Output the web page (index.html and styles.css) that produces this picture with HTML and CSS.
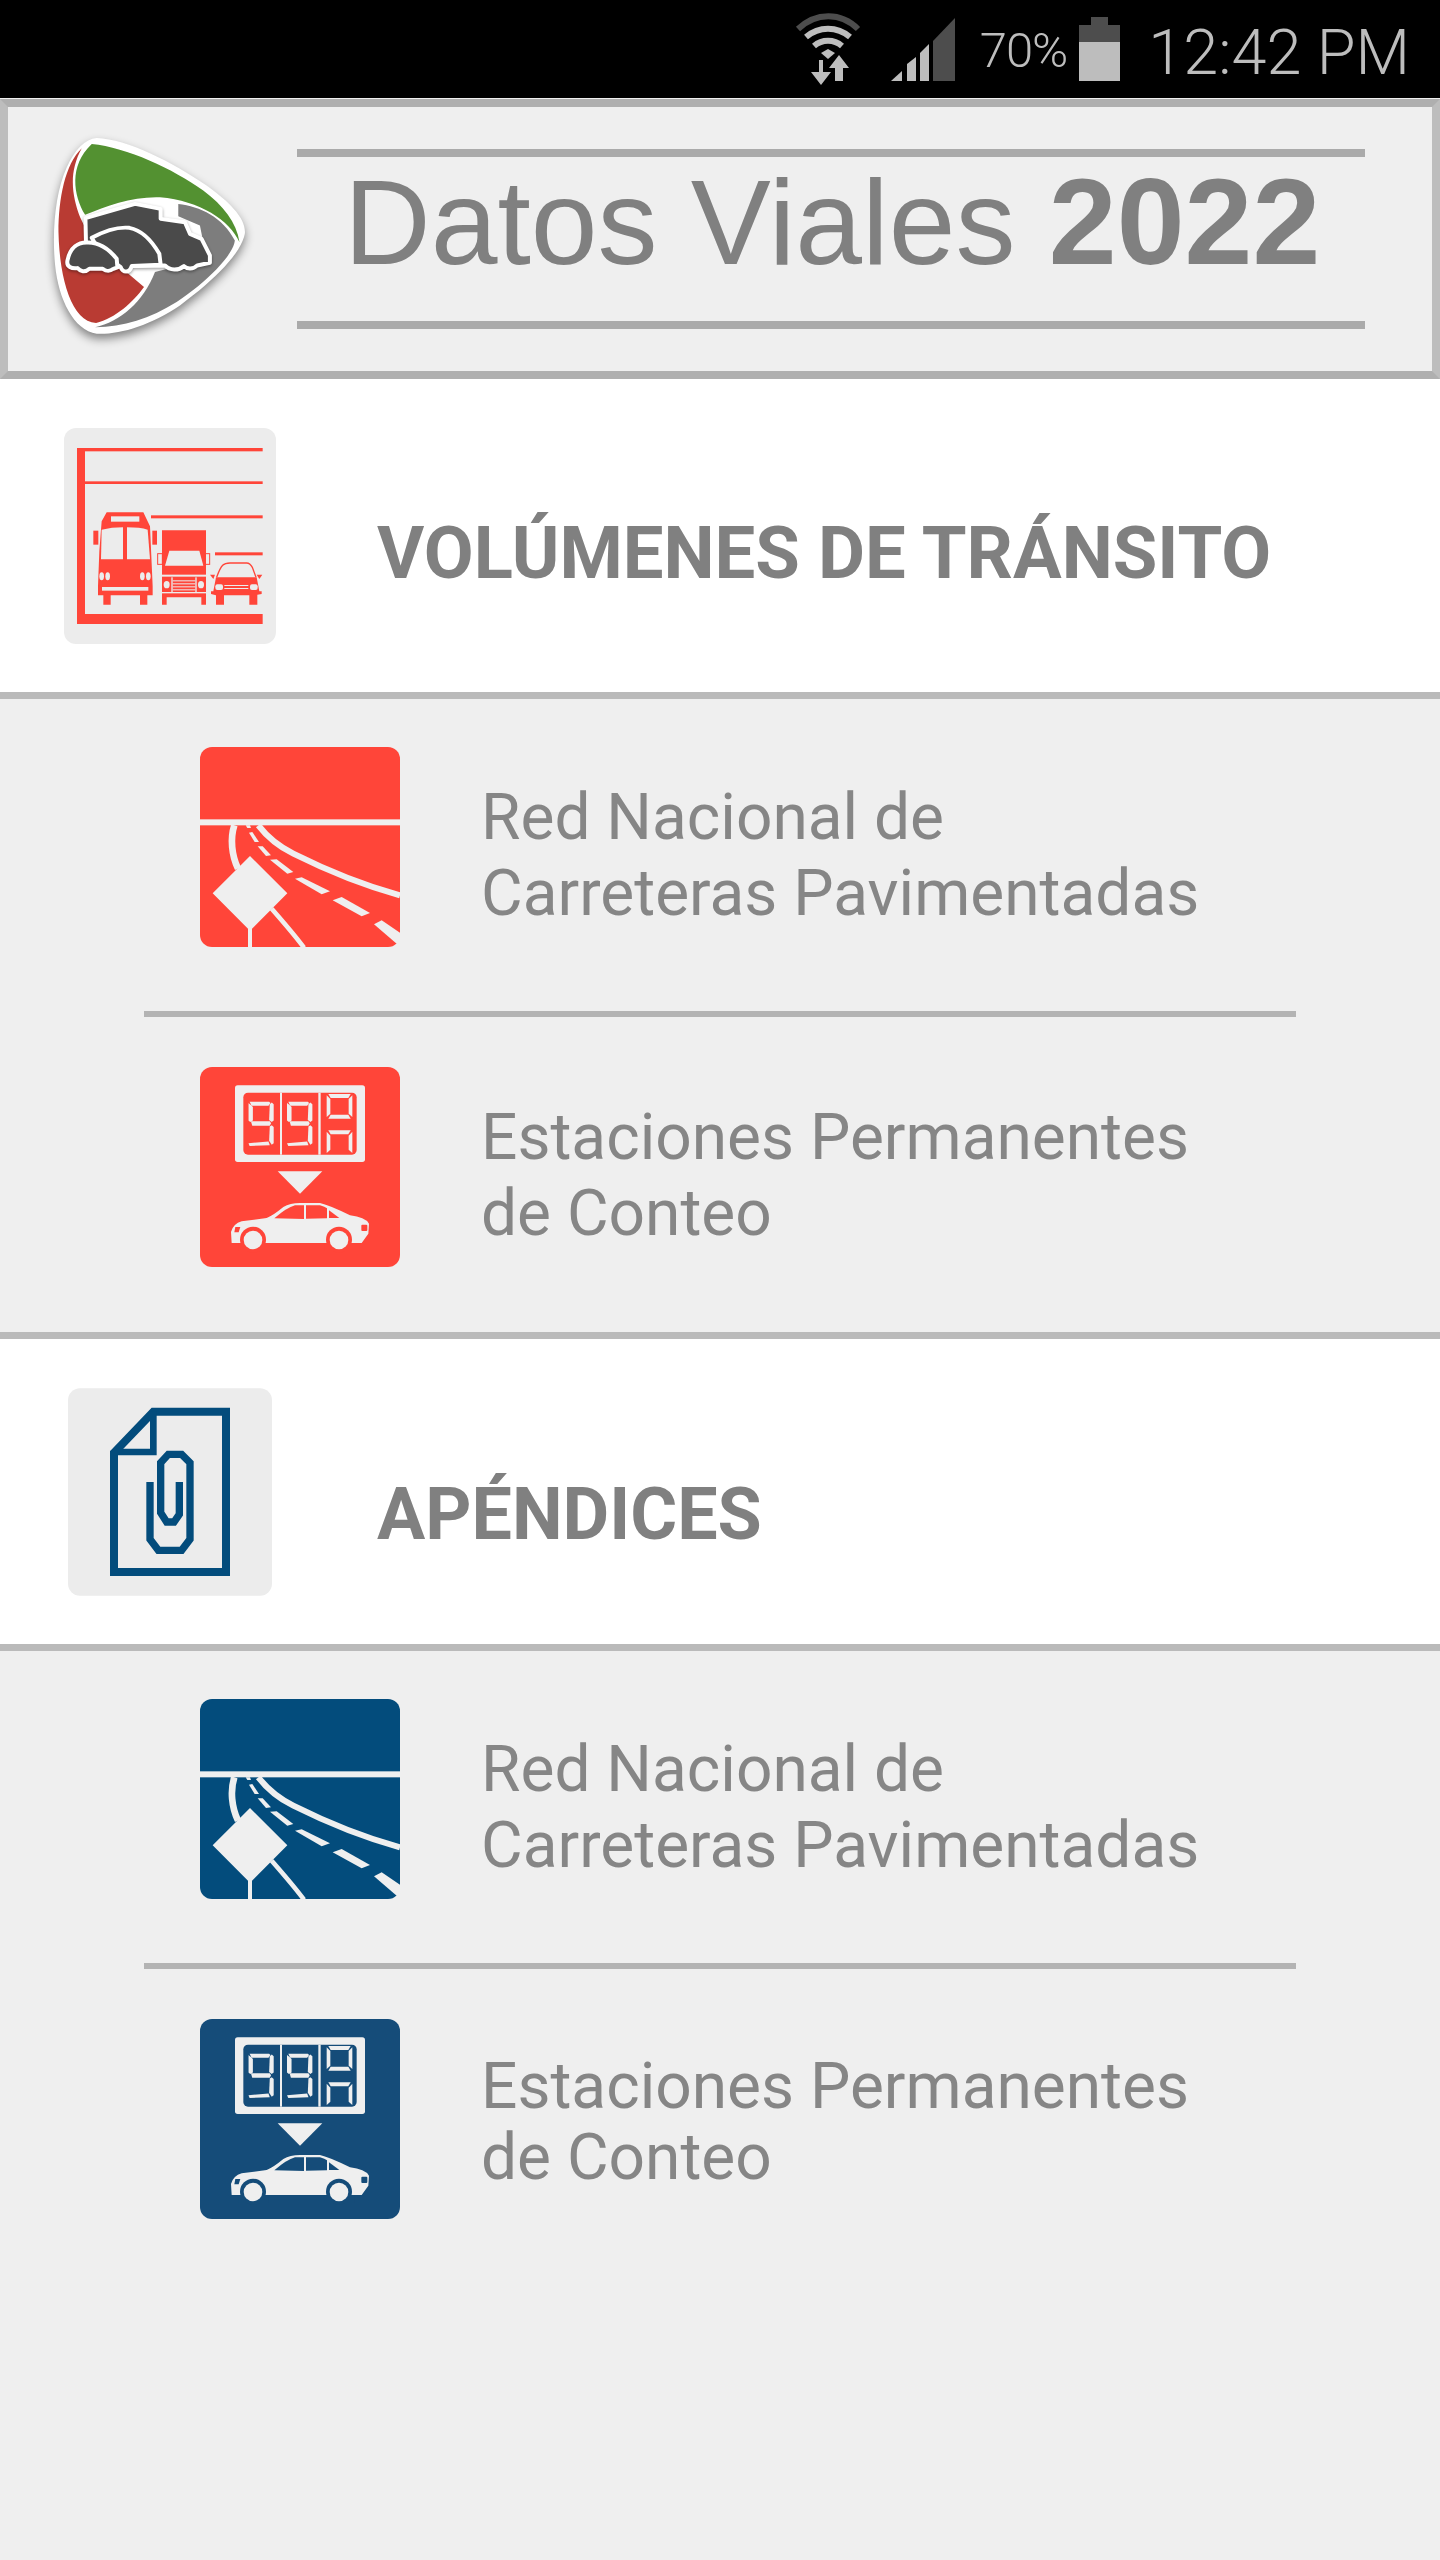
FILE: index.html
```html
<!DOCTYPE html>
<html lang="es">
<head>
<meta charset="utf-8">
<title>Datos Viales 2022</title>
<link rel="stylesheet" href="styles.css">
</head>
<body>
<svg class="defs" xmlns="http://www.w3.org/2000/svg">
  <symbol id="road" viewBox="60 50 600 600">
    <rect x="60" y="50" width="600" height="600" rx="36" fill="currentColor"/>
    <rect x="60" y="267" width="600" height="18" fill="#efefef"/>
    <g fill="none" stroke="#efefef">
      <path d="M163 285 C150 325 155 375 174 415" stroke-width="20"/>
      <path d="M235 285 C262 320 290 345 340 370 C440 420 550 465 660 495" stroke-width="18"/>
      <path d="M275 535 C310 575 345 615 372 652" stroke-width="14"/>
    </g>
    <g fill="#efefef">
      <polygon points="197,285 210,285 213,293 202,293"/>
      <polygon points="207,307 217,305 237,335 224,335"/>
      <polygon points="233,348 248,348 273,375 258,377"/>
      <polygon points="270,388 290,387 340,425 322,430"/>
      <polygon points="345,445 365,441 450,483 425,492"/>
      <polygon points="458,510 485,500 570,548 545,558"/>
      <polygon points="582,582 605,570 660,607 660,635 650,640"/>
      <polygon points="210,377 322,489 216,595 216,650 204,650 204,595 98,489"/>
    </g>
  </symbol>
  <symbol id="digit" viewBox="0 0 80 140">
    <g fill="#efefef">
      <polygon points="4,2 64,2 68,6 62,14 10,14"/>
      <polygon points="0,6 8,12 14,18 14,60 6,64 0,60"/>
      <polygon points="66,10 72,4 78,10 78,60 72,64 64,58"/>
      <polygon points="8,62 66,62 70,68 66,76 12,76"/>
      <polygon points="66,78 72,74 78,80 78,130 72,134 64,122"/>
      <polygon points="0,130 62,124 66,136 4,138"/>
    </g>
  </symbol>
  <symbol id="counter" viewBox="60 50 600 600">
    <rect x="60" y="50" width="600" height="600" rx="36" fill="currentColor"/>
    <rect x="165" y="105" width="390" height="230" rx="8" fill="#efefef"/>
    <rect x="190" y="127" width="340" height="186" rx="14" fill="currentColor"/>
    <rect x="300" y="127" width="6" height="186" fill="#efefef"/>
    <rect x="415" y="127" width="7" height="186" fill="#efefef"/>
    <use href="#digit" x="205" y="152" width="78" height="137"/>
    <use href="#digit" x="321" y="152" width="78" height="137"/>
    <g fill="#efefef">
      <polygon points="445,131 512,131 505,143 452,143"/>
      <polygon points="440,135 451,146 451,190 440,200"/>
      <polygon points="517,135 506,146 506,190 517,200"/>
      <polygon points="445,205 512,205 505,193 452,193"/>
      <polygon points="445,240 512,240 505,252 452,252"/>
      <polygon points="440,244 451,256 451,298 440,308"/>
      <polygon points="517,244 506,256 506,298 517,308"/>
    </g>
    <polygon points="293,363 427,363 360,430" fill="#efefef"/>
    <path d="M155 578 L153 545 Q160 520 185 513 L260 503 Q280 495 310 470 Q330 458 360 458 L420 458 Q450 465 510 495 Q555 500 567 520 L565 550 L545 578 Z" fill="#efefef"/>
    <g fill="currentColor">
      <path d="M283 504 Q320 472 345 465 L372 465 L372 506 Z"/>
      <path d="M378 465 L420 465 Q435 470 441 474 L441 504 L378 505 Z"/>
      <path d="M447 480 L478 503 L447 503 Z"/>
      <path d="M166 530 H181 L176 546 H163 Z"/>
      <rect x="544" y="523" width="18" height="19" rx="3"/>
      <circle cx="219" cy="568" r="39"/>
      <circle cx="477" cy="568" r="39"/>
      <rect x="175" y="578" width="90" height="24"/>
      <rect x="433" y="578" width="90" height="24"/>
    </g>
    <circle cx="219" cy="569" r="28" fill="#efefef"/>
    <circle cx="477" cy="569" r="28" fill="#efefef"/>
  </symbol>
</svg>

<div class="status">
  <svg class="st-wifi" viewBox="790 12 72 74" xmlns="http://www.w3.org/2000/svg">
    <path d="M797 29 C815 12 840 12 857 29" fill="none" stroke="#4d4d4d" stroke-width="6"/>
    <path d="M805 37 C818 26 836 26 849 37" fill="none" stroke="#bdbdbd" stroke-width="6"/>
    <path d="M813 46 C821 39 833 39 841 46" fill="none" stroke="#bdbdbd" stroke-width="6"/>
    <polygon points="820,53 827,49 834,53 827,59" fill="#bdbdbd"/>
    <polygon points="818,60 822,60 822,72 830,72 820,85 810,72 818,72" fill="#bdbdbd"/>
    <polygon points="838,55 848,68 842,68 842,81 834,81 834,68 828,68" fill="#bdbdbd"/>
  </svg>
  <svg class="st-signal" viewBox="890 18 64 63" xmlns="http://www.w3.org/2000/svg">
    <polygon points="890,81 901,71 901,81" fill="#bdbdbd"/>
    <polygon points="906,64 915,57 915,81 906,81" fill="#bdbdbd"/>
    <polygon points="919,53 928,44 928,81 919,81" fill="#bdbdbd"/>
    <polygon points="932,41 954,18 954,81 932,81" fill="#4d4d4d"/>
  </svg>
  <span class="st-pct">70%</span>
  <svg class="st-batt" viewBox="0 0 41 64" xmlns="http://www.w3.org/2000/svg">
    <rect x="12" y="0" width="17" height="9" fill="#4d4d4d"/>
    <rect x="0" y="8" width="41" height="18" fill="#4d4d4d"/>
    <rect x="0" y="25" width="41" height="39" fill="#bdbdbd"/>
  </svg>
  <span class="st-time">12:42 PM</span>
</div>

<header class="app-header">
  <svg class="logo" viewBox="150 125 600 610" xmlns="http://www.w3.org/2000/svg">
    <path d="M290 137 C380 140 520 210 620 280 C690 330 740 380 735 425 C725 480 650 560 540 640 C450 700 360 728 290 725 C220 715 175 620 165 520 C155 420 165 300 200 225 C225 170 255 140 290 137 Z" fill="#fff"/>
    <path d="M275 155 C380 165 520 230 610 295 C670 340 710 390 719 450 C690 385 600 325 480 315 C400 312 320 340 255 368 C220 310 205 220 275 155 Z" fill="#539131"/>
    <path d="M245 168 C195 215 175 320 175 420 C178 560 215 690 288 693 C345 680 400 630 432 585 L385 545 L300 500 L240 375 C215 310 205 240 245 168 Z" fill="#b93b33"/>
    <path d="M535 335 C600 342 670 375 705 445 C700 490 620 570 530 630 C450 680 370 705 285 706 C360 690 430 630 465 540 L620 500 L600 400 L535 372 Z" fill="#7d7d7d"/>
    <g class="logo-cars" stroke="#fff" stroke-width="12" stroke-linejoin="round" fill="#4a4a4a">
      <path d="M256 378 L405 335 L482 350 L482 380 L555 390 L570 425 L605 440 L630 490 L630 512 L592 520 C578 534 560 530 552 522 C535 536 510 536 495 520 L395 522 L258 470 Z"/>
      <path d="M275 437 C325 410 360 404 388 407 C430 415 458 450 478 485 L482 518 L395 522 C388 545 368 542 362 525 L300 480 Z"/>
      <path d="M202 505 C210 465 235 450 262 451 C300 450 330 475 350 500 L352 526 L340 530 C325 542 315 535 308 530 L268 530 C255 542 240 538 232 528 C215 530 198 525 202 505 Z"/>
    </g>
  </svg>
  <h1 class="app-title">Datos Viales <b>2022</b></h1>
</header>

<section class="group">
  <svg class="group-icon" viewBox="72 50 636 648" xmlns="http://www.w3.org/2000/svg">
    <rect x="72" y="50" width="636" height="648" rx="36" fill="#ececec"/>
    <g fill="#ff4539">
      <rect x="111" y="110" width="24" height="528"/>
      <rect x="111" y="608" width="557" height="30"/>
      <rect x="111" y="110" width="557" height="10"/>
      <rect x="135" y="210" width="533" height="8"/>
      <rect x="333" y="312" width="335" height="9"/>
      <rect x="525" y="423" width="143" height="9"/>
      <polygon points="200,303 310,303 330,345 338,525 338,552 322,552 322,580 300,580 300,552 212,552 212,580 190,580 190,552 174,552 174,525 178,420 185,330"/>
      <rect x="160" y="358" width="15" height="42"/>
      <rect x="337" y="358" width="14" height="42"/>
      <polygon points="366,357 498,357 498,580 484,580 484,558 380,558 380,580 366,580"/>
      <polygon points="528,498 650,498 658,540 665,540 665,548 652,550 652,580 628,580 628,552 552,552 552,580 528,580 528,552 513,548 513,540 520,540"/>
      <polygon points="510,490 525,490 520,503"/>
      <polygon points="650,490 667,490 658,503"/>
    </g>
    <path d="M530 498 Q540 470 548 462 Q555 455 570 455 L620 455 Q630 455 637 468 L648 498" fill="none" stroke="#ff4539" stroke-width="4"/>
    <g fill="none" stroke="#ff4539" stroke-width="3">
      <rect x="353" y="427" width="14" height="32"/>
      <rect x="496" y="427" width="13" height="32"/>
    </g>
    <g fill="#ececec">
      <rect x="213" y="315" width="85" height="16"/>
      <path d="M185 355 Q215 348 249 348 L249 444 L183 444 Z"/>
      <path d="M261 348 Q300 348 323 355 L330 444 L261 444 Z"/>
      <ellipse cx="185" cy="495" rx="7" ry="12"/>
      <ellipse cx="203" cy="495" rx="7" ry="12"/>
      <ellipse cx="307" cy="495" rx="7" ry="12"/>
      <ellipse cx="325" cy="495" rx="7" ry="12"/>
      <rect x="186" y="527" width="139" height="11"/>
      <polygon points="388,418 478,418 490,463 375,463"/>
      <rect x="366" y="490" width="132" height="6"/>
      <rect x="366" y="542" width="132" height="4"/>
      <rect x="394" y="498" width="4" height="44"/>
      <rect x="466" y="498" width="4" height="44"/>
      <rect x="398" y="507" width="68" height="3"/>
      <rect x="398" y="516" width="68" height="3"/>
      <rect x="398" y="525" width="68" height="3"/>
      <rect x="398" y="534" width="68" height="3"/>
      <ellipse cx="380" cy="520" rx="9" ry="11"/>
      <ellipse cx="483" cy="520" rx="9" ry="11"/>
      <path d="M538 494 Q546 470 555 462 L620 462 Q630 470 640 494 Z"/>
      <rect x="526" y="519" width="23" height="17" rx="6"/>
      <rect x="630" y="519" width="23" height="17" rx="6"/>
      <rect x="553" y="521" width="72" height="3"/>
      <rect x="553" y="530" width="72" height="3"/>
    </g>
  </svg>
  <h2 class="group-title">VOLÚMENES DE TRÁNSITO</h2>
</section>

<a class="row row-first red">
  <svg class="row-icon"><use href="#road"/></svg>
  <p class="row-text">Red Nacional de<br>Carreteras Pavimentadas</p>
</a>
<div class="row-sep"></div>
<a class="row row-second red">
  <svg class="row-icon"><use href="#counter"/></svg>
  <p class="row-text">Estaciones Permanentes<br>de Conteo</p>
</a>

<section class="group group-alt">
  <svg class="group-icon doc" viewBox="54 52 612 622" xmlns="http://www.w3.org/2000/svg">
    <rect x="54" y="52" width="612" height="622" rx="36" fill="#ececec"/>
    <g fill="none" stroke="#034c7c">
      <path d="M192 245 L310 122 H528 V603 H192 Z" stroke-width="24"/>
      <path d="M192 243 H310 V122" stroke-width="20"/>
      <path d="M300 333 V505 L325 538 H395 L420 505 V275 L395 250 H355 L332 275 V425 L350 453 H372 L388 430 V333" stroke-width="22"/>
    </g>
  </svg>
  <h2 class="group-title">APÉNDICES</h2>
</section>

<a class="row row-first blue">
  <svg class="row-icon"><use href="#road"/></svg>
  <p class="row-text">Red Nacional de<br>Carreteras Pavimentadas</p>
</a>
<div class="row-sep"></div>
<a class="row row-second navy">
  <svg class="row-icon"><use href="#counter"/></svg>
  <p class="row-text tight">Estaciones Permanentes<br>de Conteo</p>
</a>
</body>
</html>
```

FILE: styles.css
```css
* { box-sizing: border-box; }

html, body {
  margin: 0;
  padding: 0;
}

body {
  background: #efefef;
  min-height: 2560px;
  font-family: Roboto, "Liberation Sans", sans-serif;
  color: #868686;
}

.defs {
  display: none;
}

/* status bar */
.status {
  height: 98px;
  background: #000;
  color: #bdbdbd;
  display: flex;
  align-items: flex-start;
  padding-right: 30px;
  justify-content: flex-end;
  font-weight: 300;
}

.st-wifi {
  width: 72px;
  height: 74px;
  margin-top: 12px;
  margin-right: 28px;
}

.st-signal {
  width: 64px;
  height: 63px;
  margin-top: 18px;
  margin-right: 25px;
}

.st-pct {
  font-size: 49px;
  line-height: 57px;
  margin-top: 22px;
  margin-right: 12px;
  letter-spacing: -1px;
}

.st-batt {
  width: 41px;
  height: 64px;
  margin-top: 17px;
  margin-right: 28px;
}

.st-time {
  font-size: 63px;
  line-height: 75px;
  margin-top: 15px;
}

/* header */
.app-header {
  margin-top: 1px;
  height: 280px;
  background: #efefef;
  border: 8px solid #afafaf;
  border-left-color: #bdbdbd;
  border-right-color: #bdbdbd;
  display: flex;
  align-items: center;
  padding-left: 42px;
}

.logo {
  width: 200px;
  height: 203px;
  margin-right: 47px;
  margin-bottom: 7px;
  filter: drop-shadow(0 5px 5px rgba(0, 0, 0, 0.45));
}

.logo-cars {
  filter: drop-shadow(0 4px 5px rgba(0, 0, 0, 0.4));
}

.app-title {
  width: 1068px;
  height: 180px;
  margin: 0;
  border-top: 8px solid #aaa;
  border-bottom: 8px solid #aaa;
  font-family: "Liberation Sans", Arial, sans-serif;
  font-weight: 400;
  font-size: 120px;
  line-height: 130px;
  color: #808080;
  padding-left: 47px;
  white-space: nowrap;
}

.app-title b {
  font-weight: 700;
  font-size: 122px;
}

/* group headings */
.group {
  background: #fff;
  height: 320px;
  border-bottom: 7px solid #bababa;
  display: flex;
  align-items: center;
  padding-left: 64px;
}

.group-alt {
  height: 319px;
  border-top: 7px solid #bababa;
  padding-left: 68px;
}

.group-icon {
  width: 212px;
  height: 216px;
  flex: none;
}

.group-icon.doc {
  width: 204px;
  height: 208px;
}

.group-title {
  margin: 36px 0 0 101px;
  font-size: 72.4px;
  line-height: 80px;
  font-weight: 700;
  color: #808080;
  white-space: nowrap;
}

.group-alt .group-title {
  margin-left: 105px;
  margin-top: 46px;
  font-size: 71.8px;
}

/* rows */
.row {
  display: flex;
  align-items: flex-start;
  padding-left: 200px;
  gap: 81px;
}

.row-first {
  height: 312px;
  padding-top: 48px;
}

.row-second {
  height: 315px;
  padding-top: 50px;
}

.red { color: #ff4539; }
.blue { color: #034c7c; }
.navy { color: #154c79; }

.row-icon {
  width: 200px;
  height: 200px;
  flex: none;
}

.row-text {
  margin: 0;
  padding-top: 33px;
  font-size: 64px;
  line-height: 76px;
  color: #868686;
}

.row-text.tight {
  line-height: 71px;
  padding-top: 32px;
}

.row-sep {
  height: 6px;
  margin: 0 144px;
  background: #b3b3b3;
}
```
